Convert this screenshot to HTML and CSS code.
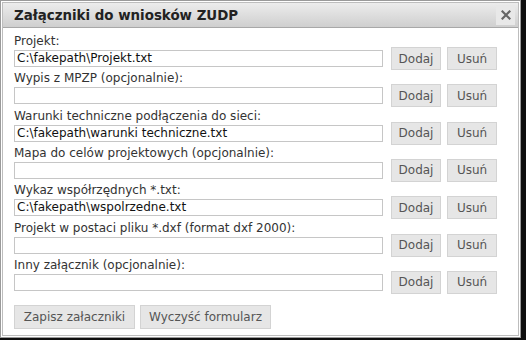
FILE: index.html
```html
<!DOCTYPE html>
<html lang="pl">
<head>
<meta charset="utf-8">
<title>Załączniki do wniosków ZUDP</title>
<link rel="stylesheet" href="styles.css">
</head>
<body>
<div class="dialog">
  <div class="inner">
    <div class="titlebar">
      <span class="title">Załączniki do wniosków ZUDP</span>
      <span class="close"><svg width="10" height="10" viewBox="0 0 10 10"><path d="M1.5 1.5 L8.5 8.5 M8.5 1.5 L1.5 8.5" stroke="#666" stroke-width="2.2" stroke-linecap="square"/></svg></span>
    </div>
    <div class="content">
      <div class="field">
        <div class="label">Projekt:</div>
        <div class="row"><div class="input">C:\fakepath\Projekt.txt</div><button class="btn">Dodaj</button><button class="btn">Usuń</button></div>
      </div>
      <div class="field">
        <div class="label">Wypis z MPZP (opcjonalnie):</div>
        <div class="row"><div class="input"></div><button class="btn">Dodaj</button><button class="btn">Usuń</button></div>
      </div>
      <div class="field">
        <div class="label">Warunki techniczne podłączenia do sieci:</div>
        <div class="row"><div class="input">C:\fakepath\warunki techniczne.txt</div><button class="btn">Dodaj</button><button class="btn">Usuń</button></div>
      </div>
      <div class="field">
        <div class="label">Mapa do celów projektowych (opcjonalnie):</div>
        <div class="row"><div class="input"></div><button class="btn">Dodaj</button><button class="btn">Usuń</button></div>
      </div>
      <div class="field">
        <div class="label">Wykaz współrzędnych *.txt:</div>
        <div class="row"><div class="input">C:\fakepath\wspolrzedne.txt</div><button class="btn">Dodaj</button><button class="btn">Usuń</button></div>
      </div>
      <div class="field">
        <div class="label">Projekt w postaci pliku *.dxf (format dxf 2000):</div>
        <div class="row"><div class="input"></div><button class="btn">Dodaj</button><button class="btn">Usuń</button></div>
      </div>
      <div class="field">
        <div class="label">Inny załącznik (opcjonalnie):</div>
        <div class="row"><div class="input"></div><button class="btn">Dodaj</button><button class="btn">Usuń</button></div>
      </div>
      <div class="actions">
        <button class="btn big save">Zapisz załaczniki</button>
        <button class="btn big clear">Wyczyść formularz</button>
      </div>
    </div>
  </div>
</div>
</body>
</html>
```
FILE: styles.css
```css
html, body {
  margin: 0;
  padding: 0;
  background: #0e0e0e;
  font-family: "DejaVu Sans", Verdana, sans-serif;
  font-size: 12px;
}
.dialog {
  width: 517px;
  height: 334px;
  border: 1px solid #9a9a9a;
  padding: 1px;
  background: #fff;
}
.inner {
  height: 332px;
  border: 1px solid #bdbdbd;
  display: flex;
  flex-direction: column;
  background: #fff;
}
.titlebar {
  height: 24px;
  display: flex;
  align-items: center;
  justify-content: space-between;
  padding: 0 3px 0 11px;
  background: linear-gradient(#ececec, #cfcfcf);
  border-bottom: 1px solid #a8a8a8;
}
.title {
  font-weight: bold;
  color: #222;
  font-size: 13.4px;
}
.close {
  width: 19px;
  height: 20px;
  background: #e8e8e8;
  display: flex;
  align-items: center;
  justify-content: center;
}
.content {
  padding: 6px 0 0 11px;
  color: #333;
}
.field {
  display: flex;
  flex-direction: column;
  margin-bottom: 1.33px;
}
.label {
  height: 14px;
  line-height: 14px;
  margin-bottom: -1px;
  color: #333;
}
.row {
  display: flex;
  align-items: center;
  height: 23px;
}
.input {
  width: 363px;
  height: 15px;
  border: 1px solid #c6c6c6;
  padding: 0 2px;
  line-height: 15px;
  color: #111;
  white-space: nowrap;
  overflow: hidden;
}
.btn {
  font-family: "DejaVu Sans", Verdana, sans-serif;
  font-size: 12px;
  color: #555;
  background: #e6e6e6;
  border: 1px solid #d3d3d3;
  height: 23px;
  width: 50px;
  padding: 0;
  margin-left: 8px;
}
.btn + .btn {
  margin-left: 6px;
}
.actions {
  display: flex;
  margin-top: 10.7px;
}
.btn.big {
  height: 24px;
  margin-left: 0;
}
.save { width: 121px; }
.btn.big + .btn.big { width: 131px; margin-left: 5px; }
```
